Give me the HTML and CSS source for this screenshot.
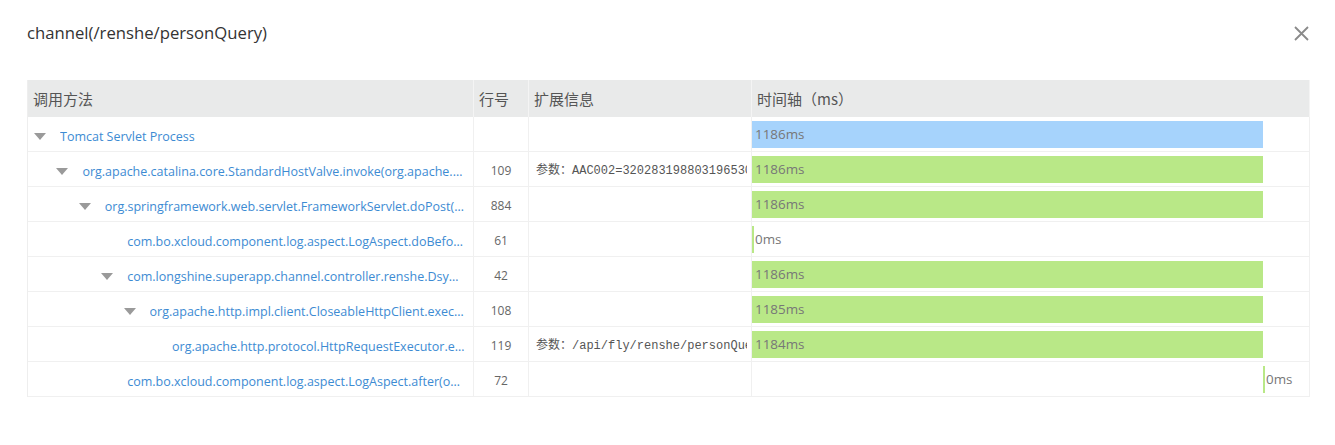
FILE: index.html
```html
<!DOCTYPE html>
<html lang="zh-CN">
<head>
<meta charset="utf-8">
<title>channel(/renshe/personQuery)</title>
<link rel="stylesheet" href="styles.css">
</head>
<body>
<div class="dialog">
  <div class="head">
    <h1 class="title">channel(/renshe/personQuery)</h1>
    <button class="close" aria-label="关闭">
      <svg width="15" height="15" viewBox="0 0 15 15"><path d="M1 1L14 14M14 1L1 14" stroke="#8a8a8a" stroke-width="1.8" fill="none"/></svg>
    </button>
  </div>
  <div class="trace">
    <div class="row hdr">
      <div class="cell">调用方法</div>
      <div class="cell">行号</div>
      <div class="cell">扩展信息</div>
      <div class="cell">时间轴（ms）</div>
    </div>

    <div class="row">
      <div class="cell method lv0"><span class="tri"></span><span class="name">Tomcat Servlet Process</span></div>
      <div class="cell line"></div>
      <div class="cell ext"></div>
      <div class="cell time"><div class="bar blue" style="margin-left:0px;width:511px"><span class="lbl">1186ms</span></div></div>
    </div>
    <div class="row">
      <div class="cell method lv1"><span class="tri"></span><span class="name">org.apache.catalina.core.StandardHostValve.invoke(org.apache.catalina.connector.Request, org.apache.catalina.connector.Response)</span></div>
      <div class="cell line">109</div>
      <div class="cell ext"><span class="clip">参数：AAC002=320283198803196530</span></div>
      <div class="cell time"><div class="bar" style="margin-left:0px;width:511px"><span class="lbl">1186ms</span></div></div>
    </div>
    <div class="row">
      <div class="cell method lv2"><span class="tri"></span><span class="name">org.springframework.web.servlet.FrameworkServlet.doPost(javax.servlet.http.HttpServletRequest, javax.servlet.http.HttpServletResponse)</span></div>
      <div class="cell line">884</div>
      <div class="cell ext"></div>
      <div class="cell time"><div class="bar" style="margin-left:0px;width:511px"><span class="lbl">1186ms</span></div></div>
    </div>
    <div class="row">
      <div class="cell method lv3"><span class="tri none"></span><span class="name">com.bo.xcloud.component.log.aspect.LogAspect.doBefore(org.aspectj.lang.JoinPoint)</span></div>
      <div class="cell line">61</div>
      <div class="cell ext"></div>
      <div class="cell time"><div class="bar" style="margin-left:0px;width:2px"><span class="lbl">0ms</span></div></div>
    </div>
    <div class="row">
      <div class="cell method lv3"><span class="tri"></span><span class="name">com.longshine.superapp.channel.controller.renshe.DsyktController.personQuery(java.util.Map)</span></div>
      <div class="cell line">42</div>
      <div class="cell ext"></div>
      <div class="cell time"><div class="bar" style="margin-left:0px;width:511px"><span class="lbl">1186ms</span></div></div>
    </div>
    <div class="row">
      <div class="cell method lv4"><span class="tri"></span><span class="name">org.apache.http.impl.client.CloseableHttpClient.execute(org.apache.http.client.methods.HttpUriRequest)</span></div>
      <div class="cell line">108</div>
      <div class="cell ext"></div>
      <div class="cell time"><div class="bar" style="margin-left:0px;width:511px"><span class="lbl">1185ms</span></div></div>
    </div>
    <div class="row">
      <div class="cell method lv5"><span class="tri none"></span><span class="name">org.apache.http.protocol.HttpRequestExecutor.execute(org.apache.http.HttpRequest)</span></div>
      <div class="cell line">119</div>
      <div class="cell ext"><span class="clip">参数：/api/fly/renshe/personQuery</span></div>
      <div class="cell time"><div class="bar" style="margin-left:0px;width:511px"><span class="lbl">1184ms</span></div></div>
    </div>
    <div class="row">
      <div class="cell method lv3"><span class="tri none"></span><span class="name">com.bo.xcloud.component.log.aspect.LogAspect.after(org.aspectj.lang.JoinPoint)</span></div>
      <div class="cell line">72</div>
      <div class="cell ext"></div>
      <div class="cell time"><div class="bar" style="margin-left:511px;width:2px"><span class="lbl">0ms</span></div></div>
    </div>
  </div>
</div>
</body>
</html>
```
FILE: styles.css
```css
* { box-sizing: border-box; }
html, body { margin: 0; padding: 0; background: #fff; }
body {
  font-family: "Open Sans", "Noto Sans", "Noto Sans CJK SC", sans-serif;
  color: #333;
}
.dialog {
  padding: 0 26px 0 27px;
}
.head {
  height: 66px;
  display: flex;
  align-items: center;
  justify-content: space-between;
  margin-bottom: 14px;
}
.title {
  margin: 0;
  font-size: 16.7px;
  font-weight: normal;
  color: #333;
  line-height: 24px;
}
.close {
  border: 0;
  background: none;
  padding: 0;
  width: 15px;
  height: 15px;
  display: flex;
  cursor: pointer;
}
.trace {
  width: 1283px;
  border-left: 1px solid #eeeeee;
}
.row {
  display: grid;
  grid-template-columns: 446px 55px 223px 558px;
  height: 35px;
}
.cell {
  display: flex;
  align-items: center;
  border-right: 1px solid #f0f0f0;
  border-bottom: 1px solid #f0f0f0;
  overflow: hidden;
  white-space: nowrap;
  font-size: 12.5px;
}
.hdr {
  height: 37px;
  background: #e9eaea;
}
.hdr .cell {
  font-family: "Noto Sans CJK SC", sans-serif;
  font-size: 15px;
  color: #555;
  padding-left: 5px;
  border-right: 1px solid #f4f4f4;
  border-bottom: 0;
}
.method {
  padding-top: 4px;
  padding-right: 8px;
  color: #3d8bd3;
}
.lv0 { padding-left: 6px; }
.lv1 { padding-left: 28.4px; }
.lv2 { padding-left: 50.8px; }
.lv3 { padding-left: 73.2px; }
.lv4 { padding-left: 95.6px; }
.lv5 { padding-left: 118px; }
.tri {
  flex: none;
  width: 0;
  height: 0;
  border-left: 6px solid transparent;
  border-right: 6px solid transparent;
  border-top: 7px solid #9a9a9a;
  margin-right: 14px;
}
.tri.none { border-top-color: transparent; }
.name {
  overflow: hidden;
  text-overflow: ellipsis;
  white-space: nowrap;
  min-width: 0;
}
.line {
  padding-top: 2px;
  justify-content: center;
  color: #666;
  font-size: 12px;
}
.ext {
  padding: 0 4px 0 7px;
  font-family: "Liberation Mono", "Noto Sans CJK SC", monospace;
  font-size: 12px;
  color: #555;
}
.clip {
  display: block;
  overflow: hidden;
  white-space: nowrap;
  min-width: 0;
}
.time {
  overflow: visible;
}
.bar {
  height: 27px;
  flex: none;
  display: flex;
  align-items: center;
  background: #b9e887;
  overflow: visible;
}
.bar.blue { background: #a6d3fc; }
.lbl {
  margin-left: 3px;
  color: #777;
  font-size: 13.4px;
  white-space: nowrap;
}
```
